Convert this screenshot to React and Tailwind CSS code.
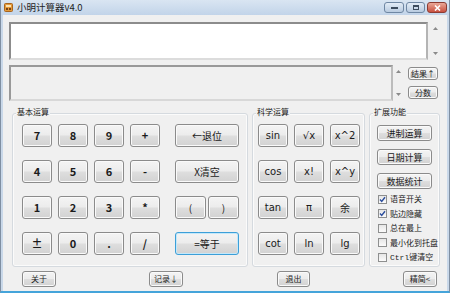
import React from 'react';

const FONT = { fontFamily: '"Microsoft YaHei", "Noto Sans CJK SC", "Noto Sans", sans-serif' };
const LATIN = { fontFamily: '"DejaVu Sans", "Noto Sans CJK SC", sans-serif' };

const Btn = ({ children, className = '', primary = false, style }) => (
    <div
        style={style}
        className={`flex items-center justify-center rounded-[3px] border bg-[linear-gradient(#f4f4f4_0%,#ececec_48%,#dedede_52%,#d2d2d2_100%)] text-[#1b1b1b] leading-none ${
            primary ? 'border-[#3c9fd8] shadow-[inset_0_0_0_1px_#c4e8fa]' : 'border-[#8b8b8b] shadow-[inset_0_0_0_1px_#fafafa]'
        } ${className}`}
    >
        {children}
    </div>
);

const Arrows = ({ className = '' }) => (
    <div className={`flex flex-col items-center justify-between py-[5px] ${className}`}>
        <svg width="5" height="3" viewBox="0 0 5 3"><path d="M2.5 0L5 3H0z" fill="#8a8a8a" /></svg>
        <svg width="5" height="3" viewBox="0 0 5 3"><path d="M0 0h5L2.5 3z" fill="#8a8a8a" /></svg>
    </div>
);

const Check = ({ checked, label }) => (
    <div className="flex items-center h-[14.5px]">
        <div className="w-[9px] h-[9px] border border-[#8e8f8f] bg-[linear-gradient(#e6e6e6,#fbfbfb)] flex items-center justify-center">
            {checked && (
                <svg width="7" height="7" viewBox="0 0 7 7"><path d="M1 3.6l1.7 1.8L6 1.2" stroke="#2a4c9c" strokeWidth="1.4" fill="none" /></svg>
            )}
        </div>
        <span className="ml-[3px] text-[8px] text-[#1b1b1b] leading-none">{label}</span>
    </div>
);

const Group = ({ title, className = '', children }) => (
    <div className={`relative border border-[#d5dadf] rounded-[3px] shadow-[inset_0_0_0_1px_#fbfbfb] ${className}`}>
        <span className="absolute -top-[6px] left-[3px] px-[1px] bg-[#f0f0f0] text-[8px] leading-none text-[#1b1b1b]">{title}</span>
        {children}
    </div>
);

export default function App() {
    const basic = ['7', '8', '9', '+', '4', '5', '6', '-', '1', '2', '3', '*', '±', '0', '.', '/'];
    const sci = ['sin', '√x', 'x^2', 'cos', 'x!', 'x^y', 'tan', 'π', '余', 'cot', 'ln', 'lg'];

    return (
        <div style={FONT} className="w-[450px] h-[293px] flex flex-col bg-[#c9d8e9] border-x border-[#7f8fa2] border-b-2 border-b-[#45a4da] overflow-hidden">
            {/* title bar */}
            <div className="h-[15px] flex items-start bg-[linear-gradient(#d9e5f2,#c2d4e9)]">
                <svg className="ml-[3px] mt-[3px]" width="9" height="9" viewBox="0 0 9 9">
                    <rect x="0.5" y="0.5" width="8" height="8" rx="1" fill="#e39a3a" stroke="#a8641e" />
                    <rect x="2" y="2" width="5" height="2" fill="#fbe3b5" />
                    <rect x="2" y="5" width="2" height="2" fill="#7b4315" />
                    <rect x="5" y="5" width="2" height="2" fill="#7b4315" />
                </svg>
                <span className="ml-[4px] mt-[3px] text-[9.5px] leading-none text-[#1e1e1e]">小明计算器v4.0</span>
                <div className="ml-auto mr-[2px] mt-[2px] flex gap-[2px]">
                    <div className="w-[20px] h-[11px] rounded-[3px] border border-[#6f87a3] bg-[linear-gradient(#e3ecf6,#b9cbe0)] flex items-center justify-center">
                        <div className="w-[7px] h-[2px] bg-[#3d4c5e]" />
                    </div>
                    <div className="w-[19px] h-[11px] rounded-[3px] border border-[#6f87a3] bg-[linear-gradient(#e3ecf6,#b9cbe0)] flex items-center justify-center">
                        <div className="w-[6px] h-[5px] border border-[#3d4c5e] border-t-2" />
                    </div>
                    <div className="w-[20px] h-[11px] rounded-[3px] border border-[#8c3b32] bg-[linear-gradient(#eaa898,#c9503f)] flex items-center justify-center">
                        <svg width="7" height="6" viewBox="0 0 7 6"><path d="M1 0.5l5 5M6 0.5l-5 5" stroke="#fff" strokeWidth="1.6" /></svg>
                    </div>
                </div>
            </div>

            {/* body */}
            <div className="flex-1 mx-[2px] bg-[#f0f0f0] pl-[6px] pt-[7px] flex flex-col">
                <div className="flex h-[38px]">
                    <div className="w-[419px] bg-white border-2 border-t-[#8c8c8c] border-l-[#8c8c8c] border-b-[#dcdcdc] border-r-[#b4b4b4]" />
                    <Arrows className="w-[15px]" />
                </div>

                <div className="flex mt-[5px]">
                    <div className="flex h-[36px]">
                        <div className="w-[384px] bg-[#f0f0f0] border-2 border-t-[#999999] border-l-[#999999] border-b-[#d8d8d8] border-r-[#bcbcbc]" />
                        <Arrows className="w-[10px]" />
                    </div>
                    <div className="ml-[5px] pt-[2px] flex flex-col gap-[6px]">
                        <Btn className="w-[30px] h-[13px] text-[8px]">结果↑</Btn>
                        <Btn className="w-[30px] h-[13px] text-[8px]">分数</Btn>
                    </div>
                </div>

                <div className="flex mt-[12px] ml-[3px] gap-[4px]">
                    <Group title="基本运算" className="w-[236px] h-[154px] pl-[9px] pt-[10px]">
                        <div className="flex">
                            <div className="grid grid-cols-[repeat(4,30px)] auto-rows-[23px] gap-x-[6px] gap-y-[13px]">
                                {basic.map((k) => (
                                    <Btn key={k} className="text-[11px] font-semibold">{k}</Btn>
                                ))}
                            </div>
                            <div className="ml-[15px] w-[64px] grid auto-rows-[23px] gap-y-[13px]">
                                <Btn className="text-[10px]">←退位</Btn>
                                <Btn className="text-[10px]">X清空</Btn>
                                <div className="flex gap-[2px]">
                                    <Btn className="flex-1 text-[10px]">(</Btn>
                                    <Btn className="flex-1 text-[10px]">)</Btn>
                                </div>
                                <Btn primary className="text-[10px]">=等于</Btn>
                            </div>
                        </div>
                    </Group>

                    <Group title="科学运算" className="w-[113px] h-[154px] pl-[5px] pt-[10px]">
                        <div className="grid grid-cols-[repeat(3,30px)] auto-rows-[23px] gap-x-[6px] gap-y-[13px]">
                            {sci.map((k) => (
                                <Btn key={k} style={k === '余' ? undefined : LATIN} className="text-[10px]">{k}</Btn>
                            ))}
                        </div>
                    </Group>

                    <Group title="扩展功能" className="w-[71px] h-[154px] pl-[7px] pt-[11px]">
                        <div className="flex flex-col gap-[8px]">
                            <Btn className="w-[55px] h-[16px] text-[9px]">进制运算</Btn>
                            <Btn className="w-[55px] h-[16px] text-[9px]">日期计算</Btn>
                            <Btn className="w-[55px] h-[16px] text-[9px]">数据统计</Btn>
                        </div>
                        <div className="mt-[3px] ml-[1px] flex flex-col">
                            <Check checked label="语音开关" />
                            <Check checked label="贴边隐藏" />
                            <Check label="总在最上" />
                            <Check label="最小化到托盘" />
                            <Check label={<><span style={{ fontFamily: '"Liberation Mono", monospace' }}>Ctrl</span>键清空</>} />
                        </div>
                    </Group>
                </div>

                <div className="flex mt-[4px] text-[8px]">
                    <Btn className="ml-[13px] w-[34px] h-[16px]">关于</Btn>
                    <Btn className="ml-[93px] w-[34px] h-[16px]">记录↓</Btn>
                    <Btn className="ml-[94px] w-[33px] h-[16px]">退出</Btn>
                    <Btn className="ml-[93px] w-[34px] h-[16px]">精简&lt;</Btn>
                </div>
            </div>
        </div>
    );
}
